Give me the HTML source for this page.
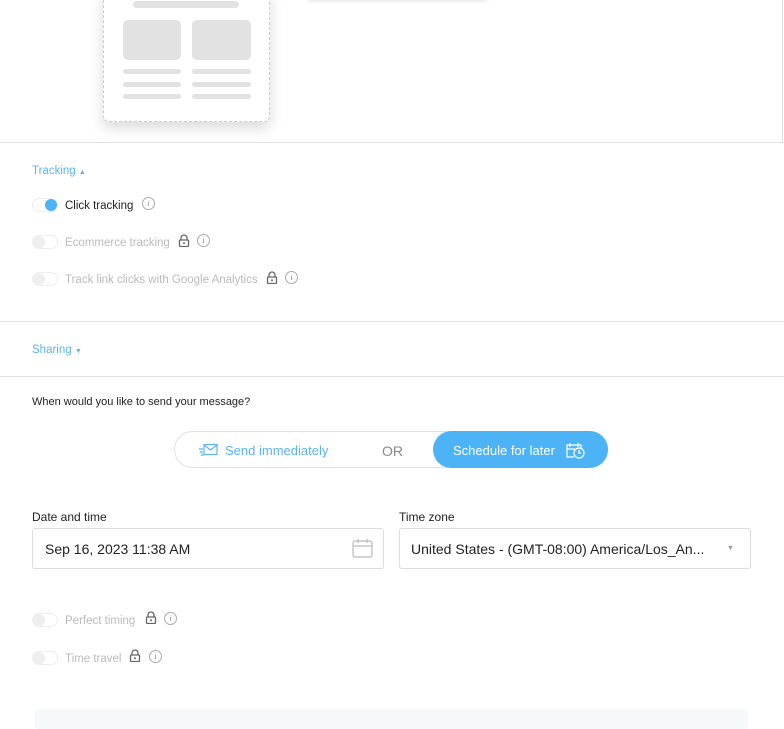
<!DOCTYPE html>
<html><head><style>
*{margin:0;padding:0;box-sizing:border-box}
body{width:784px;height:720px;overflow:hidden;background:#fff;font-family:"Liberation Sans",Arial,sans-serif;position:relative;color:#222}
.a{position:absolute}
.g{background:#e2e2e2;border-radius:3px;position:absolute}
.hr{position:absolute;left:0;width:784px;height:1px;background:#e3e3e3}
.tog{position:absolute;width:26px;height:14px;border-radius:7px;border:1px solid #eee;background:#fff}
.tog i{position:absolute;left:0;top:0;width:12px;height:12px;border-radius:50%;background:#eee}
.lbl{position:absolute;font-size:11.5px;color:#bbb}
.info{position:absolute;width:13px;height:13px;border:1px solid #aaa;border-radius:50%;font:italic 8px "Liberation Serif",serif;color:#888;text-align:center;line-height:11px}
.lock{position:absolute}
</style></head><body>
<div class="a" style="left:103px;top:-10px;width:167px;height:132px;border:1px dashed #ccc;border-radius:6px;box-shadow:0 6px 14px rgba(0,0,0,.15);background:#fff"></div>
<div class="g" style="left:133px;top:1px;width:106px;height:7px;border-radius:4px"></div>
<div class="g" style="left:123px;top:20px;width:58px;height:40px;border-radius:5px"></div>
<div class="g" style="left:192px;top:20px;width:59px;height:40px;border-radius:5px"></div>
<div class="g" style="left:123px;top:69px;width:58px;height:5px"></div><div class="g" style="left:192px;top:69px;width:59px;height:5px"></div>
<div class="g" style="left:123px;top:82px;width:58px;height:5px"></div><div class="g" style="left:192px;top:82px;width:59px;height:5px"></div>
<div class="g" style="left:123px;top:94px;width:58px;height:5px"></div><div class="g" style="left:192px;top:94px;width:59px;height:5px"></div>
<div class="a" style="left:305px;top:-20px;width:185px;height:20px;border-radius:8px;box-shadow:0 1px 4px rgba(0,0,0,.12)"></div>
<div class="a" style="left:782px;top:0;width:1px;height:142px;background:#e3e3e3"></div>
<div class="hr" style="top:142px"></div>
<div class="a" style="left:32px;top:165px;font-size:11.5px;color:#5ab4f5">Tracking <span style="font-size:7px">▲</span></div>
<div class="tog" style="left:32px;top:198px"><i style="left:12px;background:#4db3f7"></i></div>
<div class="a" style="left:65px;top:200px;font-size:11.5px;color:#222">Click tracking</div>
<div class="info" style="left:142px;top:197px">i</div>
<div class="tog" style="left:32px;top:235px"><i></i></div>
<div class="lbl" style="left:65px;top:237px">Ecommerce tracking</div>
<svg class="lock" style="left:178px;top:234px" width="12" height="13" viewBox="0 0 12 13"><path d="M3 6V4a3 3 0 0 1 6 0v2" fill="none" stroke="#666" stroke-width="1.3"/><rect x="1.5" y="6" width="9" height="6.5" rx="1" fill="none" stroke="#666" stroke-width="1.3"/><circle cx="6" cy="9.2" r="1" fill="#666"/></svg>
<div class="info" style="left:197px;top:234px">i</div>
<div class="tog" style="left:32px;top:272px"><i></i></div>
<div class="lbl" style="left:65px;top:274px">Track link clicks with Google Analytics</div>
<svg class="lock" style="left:266px;top:271px" width="12" height="13" viewBox="0 0 12 13"><path d="M3 6V4a3 3 0 0 1 6 0v2" fill="none" stroke="#666" stroke-width="1.3"/><rect x="1.5" y="6" width="9" height="6.5" rx="1" fill="none" stroke="#666" stroke-width="1.3"/><circle cx="6" cy="9.2" r="1" fill="#666"/></svg>
<div class="info" style="left:285px;top:271px">i</div>
<div class="hr" style="top:321px"></div>
<div class="a" style="left:32px;top:344px;font-size:11.5px;color:#5ab4f5">Sharing <span style="font-size:7px">▼</span></div>
<div class="hr" style="top:376px"></div>
<div class="a" style="left:32px;top:396px;font-size:11px;color:#222">When would you like to send your message?</div>
<div class="a" style="left:174px;top:431px;width:434px;height:37px;border:1px solid #e2e2e2;border-radius:19px"></div>
<div class="a" style="left:433px;top:431px;width:175px;height:37px;background:#4db3f7;border-radius:19px"></div>
<svg class="a" style="left:198px;top:443px" width="20" height="14" viewBox="0 0 20 14"><rect x="6" y="1.5" width="13" height="10" fill="none" stroke="#5ab4f5" stroke-width="1.2"/><path d="M6 2l6.5 5 6.5-5M1 6h4M2 9h3M3 12h3" fill="none" stroke="#5ab4f5" stroke-width="1.2"/></svg>
<div class="a" style="left:225px;top:443px;font-size:13px;color:#5ab4f5">Send immediately</div>
<div class="a" style="left:382px;top:443px;font-size:14px;color:#888">OR</div>
<div class="a" style="left:453px;top:443px;font-size:13px;color:#fff">Schedule for later</div>
<svg class="a" style="left:565px;top:441px" width="21" height="19" viewBox="0 0 21 19"><path d="M9 16H2V4h14v4M2 8h8M5 2v4M13 2v4" fill="none" stroke="#fff" stroke-width="1.2"/><circle cx="14" cy="12" r="5" fill="none" stroke="#fff" stroke-width="1.2"/><path d="M14 9v3h2" fill="none" stroke="#fff" stroke-width="1.2"/></svg>
<div class="a" style="left:32px;top:510px;font-size:12px;color:#222">Date and time</div>
<div class="a" style="left:399px;top:510px;font-size:12px;color:#222">Time zone</div>
<div class="a" style="left:32px;top:528px;width:352px;height:41px;border:1px solid #ddd;border-radius:3px"></div>
<div class="a" style="left:45px;top:541px;font-size:14px;color:#222">Sep 16, 2023 11:38 AM</div>
<svg class="a" style="left:352px;top:538px" width="21" height="20" viewBox="0 0 21 20"><rect x="1" y="3" width="19" height="16" rx="2" fill="none" stroke="#bbb" stroke-width="1.2"/><path d="M1 8h19M6 1v4M15 1v4" stroke="#bbb" stroke-width="1.2"/></svg>
<div class="a" style="left:399px;top:528px;width:352px;height:41px;border:1px solid #ddd;border-radius:3px"></div>
<div class="a" style="left:411px;top:541px;font-size:14px;color:#222">United States - (GMT-08:00) America/Los_An...</div>
<div class="a" style="left:727px;top:545px;font-size:7px;color:#999">▼</div>
<div class="tog" style="left:32px;top:613px"><i></i></div>
<div class="lbl" style="left:65px;top:615px">Perfect timing</div>
<svg class="lock" style="left:145px;top:611px" width="12" height="13" viewBox="0 0 12 13"><path d="M3 6V4a3 3 0 0 1 6 0v2" fill="none" stroke="#666" stroke-width="1.3"/><rect x="1.5" y="6" width="9" height="6.5" rx="1" fill="none" stroke="#666" stroke-width="1.3"/><circle cx="6" cy="9.2" r="1" fill="#666"/></svg>
<div class="info" style="left:164px;top:612px">i</div>
<div class="tog" style="left:32px;top:651px"><i></i></div>
<div class="lbl" style="left:65px;top:653px">Time travel</div>
<svg class="lock" style="left:129px;top:649px" width="12" height="13" viewBox="0 0 12 13"><path d="M3 6V4a3 3 0 0 1 6 0v2" fill="none" stroke="#666" stroke-width="1.3"/><rect x="1.5" y="6" width="9" height="6.5" rx="1" fill="none" stroke="#666" stroke-width="1.3"/><circle cx="6" cy="9.2" r="1" fill="#666"/></svg>
<div class="info" style="left:149px;top:650px">i</div>
<div class="a" style="left:35px;top:709px;width:713px;height:20px;background:#f7f8fa;border-radius:4px"></div>
</body></html>
